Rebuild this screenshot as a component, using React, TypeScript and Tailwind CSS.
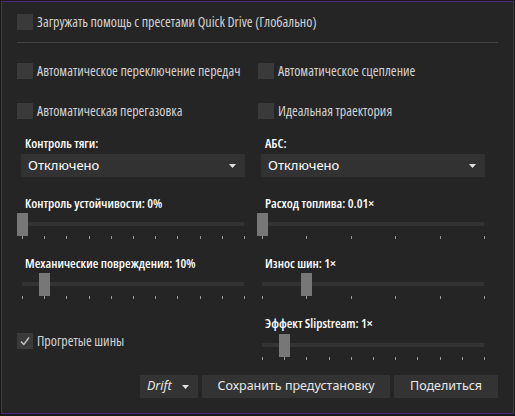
import React from "react";

const cond = "font-['Open_Sans',sans-serif] [font-stretch:condensed]";

const Checkbox = ({ label, checked = false }: { label: string; checked?: boolean }) => (
  <div className="flex items-center h-[16px]">
    <div className="w-[16px] h-[16px] bg-[#3a3a3a] flex items-center justify-center shrink-0">
      {checked && (
        <svg width="12" height="12" viewBox="0 0 12 12">
          <path d="M2 6.5 L4.8 9.5 L10 2.5" fill="none" stroke="#c8c8c8" strokeWidth="1.3" />
        </svg>
      )}
    </div>
    <span className={`${cond} ml-[4px] text-[14px] text-[#d2d2d2] whitespace-nowrap leading-none`}>{label}</span>
  </div>
);

const Label = ({ children }: { children: React.ReactNode }) => (
  <div className={`${cond} font-semibold text-[13px] leading-[16px] h-[16px] pl-[8px] text-white whitespace-nowrap`}>
    {children}
  </div>
);

const Arrow = () => (
  <svg width="7" height="4" viewBox="0 0 7 4">
    <path d="M0 0 H7 L3.5 4 Z" fill="#e0e0e0" />
  </svg>
);

const Select = ({ value }: { value: string }) => (
  <div className="ml-[4px] w-[224px] h-[23px] bg-[#323232] flex items-center justify-between pl-[7px] pr-[9px]">
    <span className="font-['Noto_Sans',sans-serif] text-[13px] text-white">{value}</span>
    <Arrow />
  </div>
);

const Slider = ({ ticks, pos }: { ticks: number; pos: number }) => {
  const trackLeft = 5;
  const trackW = 222;
  const span = trackW / (ticks - 1);
  return (
    <div className="relative w-[240px] h-[27px]">
      <div className="absolute left-[5px] top-[9px] w-[222px] h-[4px] bg-[#333333]" />
      {Array.from({ length: ticks }).map((_, i) => (
        <div
          key={i}
          className="absolute top-[23px] w-[1px] h-[3px] bg-[#9a9a9a]"
          style={{ left: trackLeft + Math.round(i * span) }}
        />
      ))}
      <div
        className="absolute top-0 w-[11px] h-[23px] bg-[#777777]"
        style={{ left: trackLeft + Math.round(pos * span) - 5 }}
      />
    </div>
  );
};

const btn = "h-[23px] bg-[#333333] flex items-center font-['Noto_Sans',sans-serif] text-[12.5px] text-[#e8e8e8]";

export default function App() {
  return (
    <div className="w-[515px] h-[416px] bg-[#1a1a1a] pt-[1px] pl-[1px]">
      <div className="w-[513px] h-[413px] border border-[#4e2580] bg-[#252525] px-[15px]">
        <div className="mt-[12px]">
          <Checkbox label="Загружать помощь с пресетами Quick Drive (Глобально)" />
        </div>
        <div className="mt-[12px] h-[1px] bg-[#454545]" />

        <div className="grid grid-cols-[240px_240px] mt-[20px]">
          <Checkbox label="Автоматическое переключение передач" />
          <div className="pl-[1px]">
            <Checkbox label="Автоматическое сцепление" />
          </div>
        </div>
        <div className="grid grid-cols-[240px_240px] mt-[24px]">
          <Checkbox label="Автоматическая перегазовка" />
          <div className="pl-[1px]">
            <Checkbox label="Идеальная траектория" />
          </div>
        </div>

        <div className="grid grid-cols-[240px_240px] mt-[16px]">
          <div>
            <Label>Контроль тяги:</Label>
            <div className="mt-[3px]">
              <Select value="Отключено" />
            </div>
            <div className="mt-[18px]">
              <Label>Контроль устойчивости: 0%</Label>
            </div>
            <div className="mt-[2px]">
              <Slider ticks={11} pos={0} />
            </div>
            <div className="mt-[15px]">
              <Label>Механические повреждения: 10%</Label>
            </div>
            <div className="mt-[2px]">
              <Slider ticks={11} pos={1} />
            </div>
            <div className="mt-[33px]">
              <Checkbox label="Прогретые шины" checked />
            </div>
          </div>
          <div>
            <Label>АБС:</Label>
            <div className="mt-[3px]">
              <Select value="Отключено" />
            </div>
            <div className="mt-[18px]">
              <Label>Расход топлива: 0.01×</Label>
            </div>
            <div className="mt-[2px]">
              <Slider ticks={6} pos={0} />
            </div>
            <div className="mt-[15px]">
              <Label>Износ шин: 1×</Label>
            </div>
            <div className="mt-[2px]">
              <Slider ticks={6} pos={1} />
            </div>
            <div className="mt-[15px]">
              <Label>Эффект Slipstream: 1×</Label>
            </div>
            <div className="mt-[3px]">
              <Slider ticks={11} pos={1} />
            </div>
          </div>
        </div>

        <div className="flex justify-end gap-[4px] mt-[14px]">
          <div className={`${btn} w-[58px] justify-between pl-[7px] pr-[9px]`}>
            <span className="italic">Drift</span>
            <Arrow />
          </div>
          <div className={`${btn} w-[188px] justify-center`}>Сохранить предустановку</div>
          <div className={`${btn} w-[104px] justify-center`}>Поделиться</div>
        </div>
      </div>
    </div>
  );
}
